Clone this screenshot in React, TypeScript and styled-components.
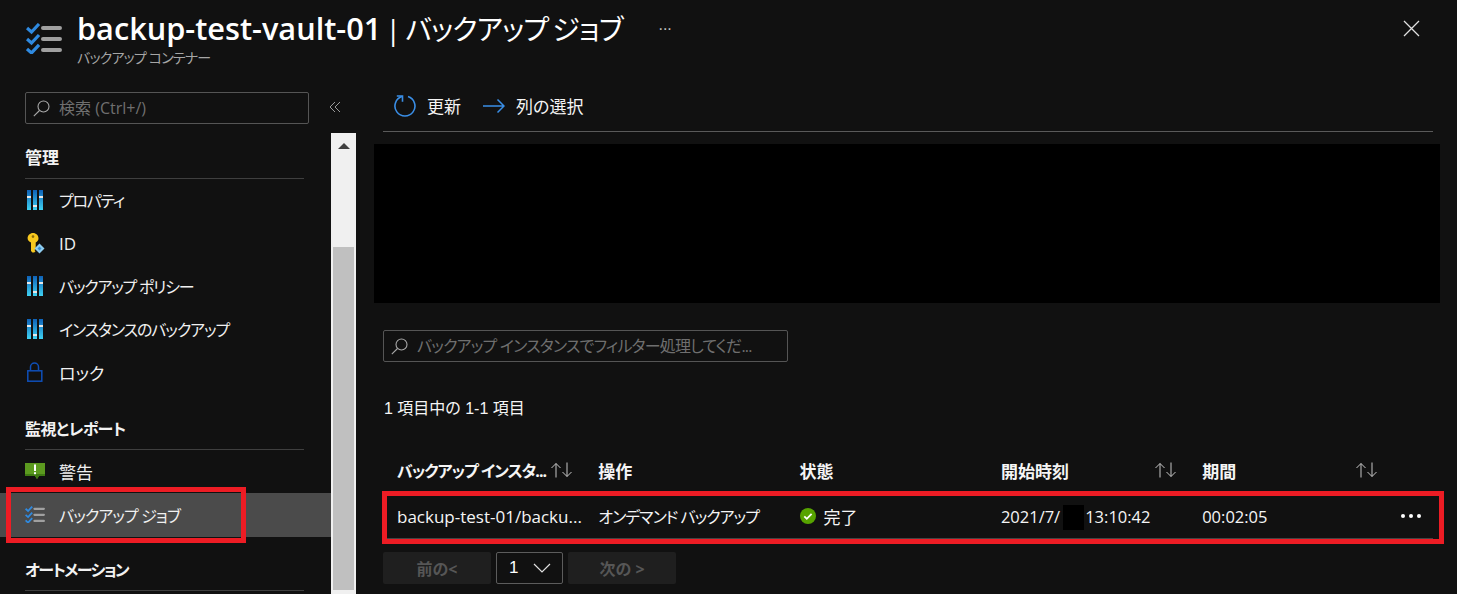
import React from 'react'
import styled, { createGlobalStyle } from 'styled-components'

const FONT = '"Open Sans", "Noto Sans CJK JP", sans-serif'

const Global = createGlobalStyle`
    html, body {
        margin: 0;
        height: 100%;
        overflow: hidden;
        background: #111111;
    }
    body {
        font-family: ${FONT};
        font-feature-settings: "palt";
        color: #ffffff;
    }
`

const Page = styled.div`
    width: 1457px;
    height: 594px;
    overflow: hidden;
    background: #111111;
    display: flex;
    flex-direction: column;
`

// katakana runs are narrower in the reference than in Noto, so they get squeezed
const Kana = styled.span<{ $ls: number; $size?: number }>`
    font-size: ${(p) => p.$size ?? 16}px;
    letter-spacing: ${(p) => p.$ls}px;
`

const Header = styled.header`
    height: 80px;
    flex: none;
    display: flex;
    padding: 8px 37px 0 26px;
    box-sizing: border-box;
`

const HeaderIcon = styled.span`
    padding-top: 15px;
`

const HeaderText = styled.div`
    margin-left: 15px;
    display: flex;
    flex-direction: column;
`

const TitleRow = styled.div`
    display: flex;
    align-items: center;
    height: 40px;
`

const Title = styled.h1`
    margin: 0;
    font-size: 28px;
    font-weight: 400;
    line-height: 40px;
    white-space: nowrap;
    word-spacing: -3px;
    b {
        font-weight: 600;
        font-size: 30.7px;
        word-spacing: 0;
    }
`

const MoreDots = styled.span`
    margin-left: 36px;
    font-size: 15px;
    line-height: 40px;
    color: #c8c8c8;
    letter-spacing: 0.5px;
`

const Subtitle = styled.div`
    font-size: 14px;
    line-height: 20px;
    color: #a6a6a6;
`

const CloseButton = styled.div`
    margin-left: auto;
    padding-top: 12px;
    color: #e0e0e0;
`

const Body = styled.div`
    flex: 1;
    display: flex;
    min-height: 0;
`

const Sidebar = styled.aside`
    width: 356px;
    flex: none;
    display: flex;
    flex-direction: column;
`

const SearchRow = styled.div`
    height: 53px;
    flex: none;
    display: flex;
    padding: 12px 0 0 25px;
    box-sizing: border-box;
    align-items: flex-start;
`

const SearchBox = styled.div<{ $width: number }>`
    width: ${(p) => p.$width}px;
    height: 32px;
    box-sizing: border-box;
    border: 1px solid #555555;
    border-radius: 2px;
    display: flex;
    align-items: center;
    gap: 9px;
    padding: 0 0 2px 7px;
    color: #6f6f6f;
    font-size: 16px;
    white-space: nowrap;
    overflow: hidden;
    svg {
        flex: none;
        margin-top: 2px;
    }
`

const Collapse = styled.div`
    display: flex;
    margin: 9px 0 0 20px;
    color: #9a9a9a;
`

const SideContent = styled.div`
    flex: 1;
    display: flex;
    min-height: 0;
`

const Nav = styled.nav`
    width: 331px;
    flex: none;
`

const SectionHeading = styled.div<{ $gap?: number }>`
    margin: ${(p) => p.$gap ?? 0}px 27px 0 25px;
    height: 46px;
    box-sizing: border-box;
    padding-top: 14px;
    border-bottom: 1px solid #3f3f3f;
    font-size: 17px;
    line-height: 22px;
    font-weight: 700;
    color: #f2f2f2;
`

const NavItem = styled.div<{ $active?: boolean }>`
    position: relative;
    height: ${(p) => (p.$active ? 44 : 43)}px;
    display: flex;
    align-items: center;
    padding: 0 0 1px 25px;
    box-sizing: border-box;
    font-size: 17px;
    color: #f0f0f0;
    background: ${(p) => (p.$active ? '#4b4b4b' : 'transparent')};
    ${(p) =>
        p.$active &&
        `&::after {
            content: '';
            position: absolute;
            left: 6px;
            top: -6px;
            width: 240px;
            height: 56px;
            box-sizing: border-box;
            border: 5px solid #ed1c24;
        }`}
`

const NavIcon = styled.span`
    width: 34px;
    flex: none;
    display: flex;
    align-items: center;
`

const ScrollTrack = styled.div`
    width: 25px;
    flex: none;
    background: #f0f0f0;
    display: flex;
    flex-direction: column;
    align-items: center;
`

const ScrollArrow = styled.div`
    margin: 10px 0 98px;
    width: 0;
    height: 0;
    flex: none;
    border-left: 6px solid transparent;
    border-right: 6px solid transparent;
    border-bottom: 6px solid #404040;
`

const ScrollThumb = styled.div`
    width: 21px;
    height: 343px;
    background: #c0c0c0;
    flex: none;
`

const Main = styled.main`
    flex: 1;
    min-width: 0;
    padding: 0 24px 0 27px;
    display: flex;
    flex-direction: column;
`

const Toolbar = styled.div`
    height: 52px;
    flex: none;
    box-sizing: border-box;
    border-bottom: 1px solid #5a5a5a;
    display: flex;
    align-items: center;
    padding: 0 0 0 11px;
    font-size: 17px;
`

const ToolButton = styled.div`
    display: flex;
    align-items: center;
    gap: 11px;
    margin-right: 22px;
    color: #f5f5f5;
`

const Redacted = styled.div`
    height: 159px;
    flex: none;
    margin: 12px -7px 0 -9px;
    background: #000000;
`

const FilterWrap = styled.div`
    margin-top: 27px;
    flex: none;
`

const ResultCount = styled.div`
    margin: 36px 0 0 1px;
    height: 22px;
    flex: none;
    font-size: 16px;
    line-height: 22px;
    color: #f5f5f5;
    font-family: "Liberation Sans", "Noto Sans CJK JP", sans-serif;
`

const TableHead = styled.div`
    margin-top: 38px;
    height: 37px;
    flex: none;
    display: grid;
    grid-template-columns: repeat(5, 201.3px);
    padding-left: 14px;
    align-items: start;
`

const HeadCell = styled.div`
    width: 176px;
    display: flex;
    justify-content: space-between;
    align-items: center;
    height: 24px;
    font-size: 17px;
    font-weight: 700;
    white-space: nowrap;
    color: #f5f5f5;
    svg {
        flex: none;
    }
`

const TableRow = styled.div`
    position: relative;
    height: 44px;
    flex: none;
    box-sizing: border-box;
    border-top: 1px solid #444444;
    border-bottom: 1px solid #444444;
    display: grid;
    grid-template-columns: repeat(4, 201.3px) 1fr;
    padding: 0 0 2px 14px;
    align-items: center;
    font-size: 17px;
    white-space: nowrap;
    color: #f5f5f5;
    &::after {
        content: '';
        position: absolute;
        left: -1px;
        right: -11px;
        top: -5px;
        bottom: -6px;
        border: 5px solid #ed1c24;
    }
`

const Cell = styled.div`
    display: flex;
    align-items: center;
    gap: 8px;
`

const DateCell = styled.div<{ $spread?: boolean }>`
    display: flex;
    align-items: center;
    justify-content: ${(p) => (p.$spread ? 'space-between' : 'flex-start')};
    font-size: 16.5px;
`

const Mask = styled.span`
    width: 21px;
    height: 25px;
    background: #000000;
    margin: 2px 1px 0 3px;
`

const RowMore = styled.div`
    display: flex;
    justify-content: flex-end;
    gap: 4px;
    padding-right: 12px;
    i {
        width: 4px;
        height: 4px;
        border-radius: 50%;
        background: #ffffff;
    }
`

const Pager = styled.div`
    margin-top: 13px;
    display: flex;
    gap: 5px;
    flex: none;
`

const PageButton = styled.div`
    width: 108px;
    height: 32px;
    border-radius: 2px;
    background: #1f1f1f;
    color: #565656;
    font-size: 16px;
    font-weight: 700;
    display: flex;
    align-items: center;
    justify-content: center;
`

const PageSelect = styled.div`
    width: 67px;
    height: 32px;
    box-sizing: border-box;
    border: 1px solid #5c5c5c;
    border-radius: 2px;
    display: flex;
    align-items: center;
    justify-content: space-between;
    padding: 0 11px 0 12px;
    font-size: 17px;
    font-family: "Liberation Sans", sans-serif;
`

const ListCheckIcon = ({ size }: { size: number }) => (
    <svg width={size} height={size * 0.86} viewBox="0 0 36 31" fill="none">
        <g stroke="#2f8ae0" strokeWidth="3.2">
            <path d="M1 5l4.5 4L13 1" />
            <path d="M1 16l4.5 4L13 12" />
            <path d="M1 26l4.5 4L13 22" />
        </g>
        <g fill="#a0a0a0">
            <rect x="15" y="3" width="21" height="4" rx="2" />
            <rect x="15" y="14" width="21" height="4" rx="2" />
            <rect x="15" y="25" width="21" height="4" rx="2" />
        </g>
    </svg>
)

const SlidersIcon = () => (
    <svg width="18" height="20" viewBox="0 0 18 20">
        <defs>
            <linearGradient id="bar" x1="0" y1="0" x2="0" y2="1">
                <stop offset="0" stopColor="#0f62b8" />
                <stop offset="1" stopColor="#3fd2f2" />
            </linearGradient>
        </defs>
        <rect x="2" width="4" height="20" fill="url(#bar)" />
        <rect x="8" width="4" height="20" fill="url(#bar)" />
        <rect x="14" width="4" height="20" fill="url(#bar)" />
        <g>
            <rect x="2" y="6" width="4" height="2" fill="#e8e8e8" />
            <rect x="8" y="15" width="4" height="2" fill="#e8e8e8" />
            <rect x="14" y="6" width="4" height="2" fill="#e8e8e8" />
        </g>
    </svg>
)

const KeyIcon = () => (
    <svg width="20" height="21" viewBox="-2 0 20 21">
        <path d="M6 0c3 0 5.500 2.300 5.500 5.200 0 2-1.100 3.400-2.800 4.300V16l-1.200 1 1 1.200-1.300 1.300H5.400L4 18V9.500C2 8.600.6 7.200.6 5.200.6 2.300 3 0 6 0z" fill="#f7c81e" />
        <circle cx="6" cy="3.600" r="1.300" fill="#8a6a0a" />
        <path d="M12.500 10.500l5 5-5 5-5-5z" fill="#8fcdf0" />
        <path d="M12.500 13.500l2 2-2 2-2-2z" fill="#3c8fd0" />
    </svg>
)

const LockIcon = () => (
    <svg width="18" height="20" viewBox="-2 0 18 20" fill="none" stroke="#0f4fb8" strokeWidth="1.500">
        <path d="M3.500 8V5a4 4 0 0 1 8 0v3" />
        <rect x="0.800" y="8.800" width="14" height="10.400" />
    </svg>
)

const AlertIcon = () => (
    <svg width="20" height="17" viewBox="0 0 20 17">
        <path d="M0 0h20v13h-6l-2 3-2-3H0z" fill="#5c9a1f" />
        <path d="M0 11h20v2h-6l-2 3-2-3H0z" fill="#3f7a12" />
        <rect x="9" y="1.500" width="2" height="6.500" fill="#fff" />
        <rect x="9" y="9.200" width="2" height="2" fill="#fff" />
    </svg>
)

const SearchGlass = () => (
    <svg width="17" height="17" viewBox="0 0 17 17" fill="none" stroke="#a8a8a8" strokeWidth="1.100">
        <circle cx="10.500" cy="6.500" r="5.500" />
        <path d="M6.500 10.500L0.800 16.200" />
    </svg>
)

const RefreshIcon = () => (
    <svg width="22" height="22" viewBox="0 0 22 22" fill="none" stroke="#3a8ee6" strokeWidth="1.600">
        <path d="M14 1.500A10 10 0 1 1 7.900 1.500" />
        <path d="M2.800 1H8.500V6.800" />
    </svg>
)

const ArrowIcon = () => (
    <svg width="22" height="14" viewBox="0 0 22 14" fill="none" stroke="#3a8ee6" strokeWidth="1.500">
        <path d="M0 7h21M14.500 0.500L21 7l-6.500 6.500" />
    </svg>
)

const SortIcon = () => (
    <svg width="23" height="16" viewBox="0 0 23 16" fill="none" stroke="#c8c8c8" strokeWidth="1">
        <path d="M6 15.500V1.500M1.500 6L6 1.500 10.500 6" />
        <path d="M17 .5V14.500M12.500 10L17 14.500 21.500 10" />
    </svg>
)

const SortHead = ({ label, sort }: { label: React.ReactNode; sort?: boolean }) => (
    <HeadCell>
        <span>{label}</span>
        {sort && <SortIcon />}
    </HeadCell>
)

const App: React.FC = () => {
    return (
        <Page>
            <Global />
            <Header>
                <HeaderIcon>
                    <ListCheckIcon size={36} />
                </HeaderIcon>
                <HeaderText>
                    <TitleRow>
                        <Title>
                            <b>backup-test-vault-01</b> | <Kana $size={28} $ls={-0.7}>バックアップ ジョブ</Kana>
                        </Title>
                        <MoreDots>···</MoreDots>
                    </TitleRow>
                    <Subtitle><Kana $size={14} $ls={-0.8}>バックアップ コンテナー</Kana></Subtitle>
                </HeaderText>
                <CloseButton>
                    <svg width="17" height="17" viewBox="0 0 17 17" stroke="currentColor" strokeWidth="1.300">
                        <path d="M1 1l15 15M16 1L1 16" />
                    </svg>
                </CloseButton>
            </Header>
            <Body>
                <Sidebar>
                    <SearchRow>
                        <SearchBox $width={284}>
                            <SearchGlass />
                            検索 (Ctrl+/)
                        </SearchBox>
                        <Collapse>
                            <svg width="12" height="12" viewBox="0 0 12 12" fill="none" stroke="currentColor">
                                <path d="M6 1L1 6l5 5M11 1L6 6l5 5" />
                            </svg>
                        </Collapse>
                    </SearchRow>
                    <SideContent>
                        <Nav>
                            <SectionHeading>管理</SectionHeading>
                            <NavItem><NavIcon><SlidersIcon /></NavIcon><Kana $ls={-1.3}>プロパティ</Kana></NavItem>
                            <NavItem><NavIcon><KeyIcon /></NavIcon>ID</NavItem>
                            <NavItem><NavIcon><SlidersIcon /></NavIcon><Kana $ls={-1.2}>バックアップ ポリシー</Kana></NavItem>
                            <NavItem><NavIcon><SlidersIcon /></NavIcon><Kana $ls={-1.1}>インスタンスのバックアップ</Kana></NavItem>
                            <NavItem><NavIcon><LockIcon /></NavIcon>ロック</NavItem>
                            <SectionHeading $gap={10}><Kana $ls={-0.6}>監視とレポート</Kana></SectionHeading>
                            <NavItem><NavIcon><AlertIcon /></NavIcon>警告</NavItem>
                            <NavItem $active><NavIcon><ListCheckIcon size={20} /></NavIcon><Kana $ls={-0.9}>バックアップ ジョブ</Kana></NavItem>
                            <SectionHeading $gap={8}><Kana $ls={-1.6}>オートメーション</Kana></SectionHeading>
                        </Nav>
                        <ScrollTrack>
                            <ScrollArrow />
                            <ScrollThumb />
                        </ScrollTrack>
                    </SideContent>
                </Sidebar>
                <Main>
                    <Toolbar>
                        <ToolButton><RefreshIcon />更新</ToolButton>
                        <ToolButton><ArrowIcon />列の選択</ToolButton>
                    </Toolbar>
                    <Redacted />
                    <FilterWrap>
                        <SearchBox $width={405}>
                            <SearchGlass />
                            <Kana $ls={-0.8}>バックアップ インスタンスでフィルター処理してくだ...</Kana>
                        </SearchBox>
                    </FilterWrap>
                    <ResultCount>1 項目中の 1-1 項目</ResultCount>
                    <TableHead>
                        <SortHead label={<Kana $ls={-1}>バックアップ インスタ...</Kana>} sort />
                        <SortHead label="操作" />
                        <SortHead label="状態" />
                        <SortHead label="開始時刻" sort />
                        <SortHead label="期間" sort />
                    </TableHead>
                    <TableRow>
                        <Cell>backup-test-01/backu...</Cell>
                        <Cell><Kana $ls={-1}>オンデマンド バックアップ</Kana></Cell>
                        <Cell>
                            <svg width="16" height="16" viewBox="0 0 16 16">
                                <circle cx="8" cy="8" r="8" fill="#57a300" />
                                <path d="M4.300 8.300l2.500 2.500 4.800-5" fill="none" stroke="#fff" strokeWidth="1.800" />
                            </svg>
                            完了
                        </Cell>
                        <DateCell>2021/7/<Mask />13:10:42</DateCell>
                        <DateCell $spread>
                            00:02:05
                            <RowMore><i /><i /><i /></RowMore>
                        </DateCell>
                    </TableRow>
                    <Pager>
                        <PageButton>前の&lt;</PageButton>
                        <PageSelect>
                            1
                            <svg width="18" height="10" viewBox="0 0 18 10" fill="none" stroke="#e0e0e0" strokeWidth="1.200">
                                <path d="M1 1l8 8 8-8" />
                            </svg>
                        </PageSelect>
                        <PageButton>次の &gt;</PageButton>
                    </Pager>
                </Main>
            </Body>
        </Page>
    )
}

export default App
